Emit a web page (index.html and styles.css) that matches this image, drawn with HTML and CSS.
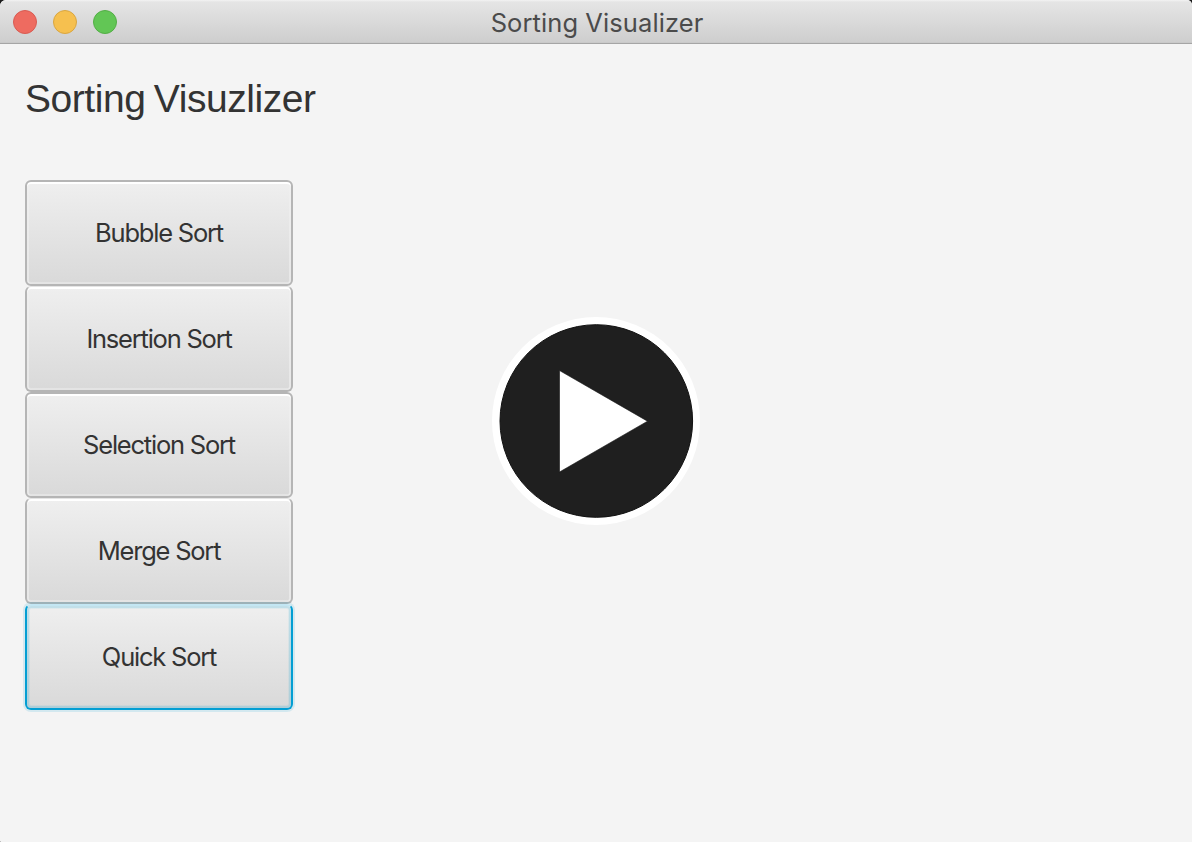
FILE: index.html
```html
<!DOCTYPE html>
<html lang="en">
<head>
<meta charset="utf-8">
<title>Sorting Visualizer</title>
<link rel="stylesheet" href="styles.css">
</head>
<body>
<div class="window">
  <header class="titlebar">
    <div class="lights">
      <span class="light close"></span>
      <span class="light minimize"></span>
      <span class="light zoom"></span>
    </div>
    <span class="caption">Sorting Visualizer</span>
  </header>
  <main class="content">
    <section class="sidebar">
      <h1 class="heading">Sorting Visuzlizer</h1>
      <nav class="sorts">
        <button class="sort bubble">Bubble Sort</button>
        <button class="sort tucked insertion">Insertion Sort</button>
        <button class="sort selection">Selection Sort</button>
        <button class="sort tucked merge">Merge Sort</button>
        <button class="sort focused quick">Quick Sort</button>
      </nav>
    </section>
    <svg class="play" width="208" height="208" viewBox="0 0 208 208">
      <circle cx="104" cy="104" r="104" fill="#fff"/>
      <circle cx="104.300" cy="104" r="96.300" fill="#1f1f1f" stroke="#111" stroke-width="1"/>
      <path d="M67.500 53.500V155L155.500 104.200Z" fill="#fff" stroke="#111" stroke-width=".6"/>
    </svg>
  </main>
</div>
</body>
</html>
```
FILE: styles.css
```css
body {
  margin: 0;
  background: #1c1c1c;
}

.window {
  width: 1192px;
  height: 842px;
  overflow: hidden;
  border-radius: 6px 5px 0 1px;
  background: #f4f4f4;
}

.titlebar {
  box-sizing: border-box;
  height: 44px;
  display: grid;
  grid-template-columns: 1fr auto 1fr;
  align-items: center;
  padding: 0 11px 0 13px;
  border-bottom: 1px solid #a5a5a5;
  background: linear-gradient(#f3f3f3 0, #e5e5e5 2px, #cecece 42px, #c4c4c4 43px);
}

.lights {
  display: flex;
  gap: 16px;
}

.light {
  box-sizing: border-box;
  width: 24px;
  height: 24px;
  border-radius: 50%;
}

.close {
  border: 1px solid #d85b52;
  background: #ee6b60;
}

.minimize {
  border: 1px solid #d9a641;
  background: #f6c04f;
}

.zoom {
  border: 1px solid #53ae46;
  background: #62c655;
}

.caption {
  padding-top: 3px;
  font: 25.5px/30px Inter, sans-serif;
  letter-spacing: 0.08px;
  color: #4b4b4b;
}

.content {
  height: 798px;
  display: flex;
}

.sidebar {
  width: 467px;
  padding: 31px 0 0 25px;
}

.heading {
  margin: 0;
  height: 105px;
  font: 39px/48px "Liberation Sans", Arial, sans-serif;
  letter-spacing: -0.45px;
  word-spacing: -2px;
  white-space: nowrap;
  color: #333;
}

.sorts {
  width: 268px;
  display: flex;
  flex-direction: column;
}

.sort {
  box-sizing: border-box;
  width: 268px;
  height: 106px;
  padding: 0;
  border: 2px solid #b5b5b5;
  border-radius: 6px;
  background: linear-gradient(#efefef, #d9d9d9) padding-box;
  box-shadow: inset 0 2px #fff, inset 2px 0 #f0f0f099, inset -2px 0 #f0f0f099, inset 0 -2px #e4e4e4;
  font: 25.5px/32px Inter, sans-serif;
  letter-spacing: -1.22px;
  color: #333;
}

.tucked {
  padding-top: 1px;
  border-top: 1px solid #e4e4e4;
}

.focused {
  border-color: #c3e6f3 #039ed3 #039ed3;
  box-shadow: 0 0 0 2px #039ed322, inset 0 0 0 2px #039ed322, inset 0 0 0 3px #039ed311;
}

.play {
  margin-top: 273px;
}
```
